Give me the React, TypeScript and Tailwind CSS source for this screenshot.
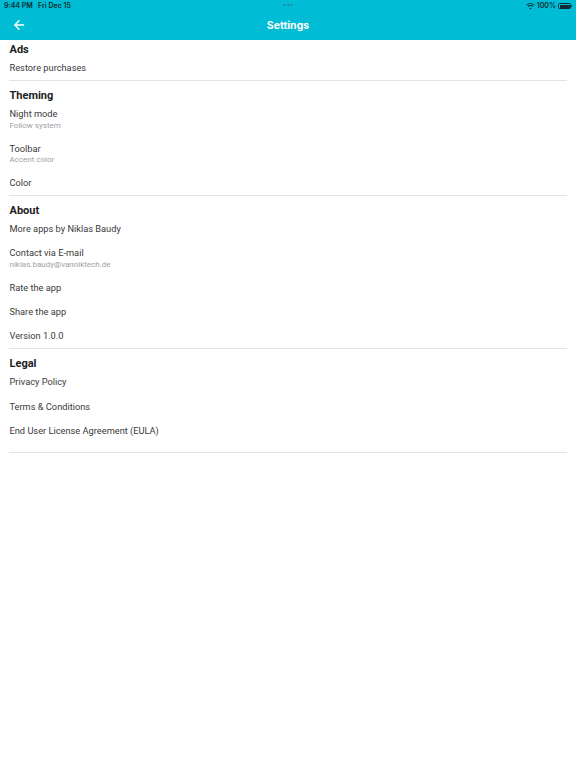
import React from "react";

type Item = { title: string; subtitle?: string };

type Section = { heading: string; items: Item[] };

const sections: Section[] = [
  { heading: "Ads", items: [{ title: "Restore purchases" }] },
  {
    heading: "Theming",
    items: [
      { title: "Night mode", subtitle: "Follow system" },
      { title: "Toolbar", subtitle: "Accent color" },
      { title: "Color" },
    ],
  },
  {
    heading: "About",
    items: [
      { title: "More apps by Niklas Baudy" },
      { title: "Contact via E-mail", subtitle: "niklas.baudy@vanniktech.de" },
      { title: "Rate the app" },
      { title: "Share the app" },
      { title: "Version 1.0.0" },
    ],
  },
  {
    heading: "Legal",
    items: [
      { title: "Privacy Policy" },
      { title: "Terms & Conditions" },
      { title: "End User License Agreement (EULA)" },
    ],
  },
];

function StatusBar() {
  return (
    <div className="relative flex h-[12px] items-center justify-between px-[4px] text-[7px] font-semibold text-[#0d2b30]">
      <span>9:44 PM&nbsp;&nbsp; Fri Dec 15</span>
      <div className="absolute left-1/2 top-[4px] flex -translate-x-1/2 gap-[1.5px]">
        <span className="h-[2px] w-[2px] rounded-full bg-[#2a7d88]" />
        <span className="h-[2px] w-[2px] rounded-full bg-[#2a7d88]" />
        <span className="h-[2px] w-[2px] rounded-full bg-[#2a7d88]" />
      </div>
      <div className="flex items-center gap-[2px]">
        <svg width="9" height="7" viewBox="0 0 18 14" fill="#0d2b30">
          <path d="M9 2.2c2.9 0 5.5 1.1 7.5 3l1.3-1.4C15.5 1.6 12.4.3 9 .3S2.5 1.6.2 3.8l1.3 1.4c2-1.9 4.6-3 7.5-3zm0 4c1.8 0 3.4.7 4.6 1.8l1.3-1.4C13.4 5.1 11.3 4.2 9 4.2S4.6 5.1 3.1 6.6l1.3 1.4C5.6 6.9 7.2 6.2 9 6.2zm0 3.9c-.8 0-1.6.3-2.1.8L9 13.2l2.1-2.3c-.5-.5-1.3-.8-2.1-.8z" />
        </svg>
        <span>100%</span>
        <div className="flex items-center">
          <div className="flex h-[6px] w-[13px] items-center rounded-[1.5px] border border-[#0d2b30] p-[0.5px]">
            <div className="h-full w-full rounded-[0.5px] bg-[#0d2b30]" />
          </div>
          <div className="h-[2px] w-[1px] rounded-r-sm bg-[#0d2b30]" />
        </div>
      </div>
    </div>
  );
}

function Header() {
  return (
    <header className="h-[40px] bg-[#00bcd4] text-white">
      <StatusBar />
      <div className="relative flex h-[27px] items-center justify-center">
        <svg
          className="absolute left-[13px] top-[7px]"
          width="12"
          height="12"
          viewBox="0 0 24 24"
          fill="none"
          stroke="white"
          strokeWidth="2.6"
          strokeLinecap="square"
        >
          <path d="M21 12H4M12 3.5L3.5 12l8.5 8.5" />
        </svg>
        <h1 className="pt-[1px] text-[10.5px] font-bold">Settings</h1>
      </div>
    </header>
  );
}

function Row({ title, subtitle }: Item) {
  return (
    <div className="px-[9.5px] py-[6px] font-['Roboto',sans-serif]">
      <div className="text-[9.25px] leading-[12.25px] text-[#3a3a3c]">{title}</div>
      {subtitle ? (
        <div className="text-[8px] leading-[10px] text-[#a0a0a4]">{subtitle}</div>
      ) : null}
    </div>
  );
}

export default function App() {
  return (
    <div
      className="min-h-[768px] bg-white"
      style={{ fontFamily: "Inter, 'Liberation Sans', sans-serif" }}
    >
      <Header />
      <main>
        {sections.map((section, i) => (
          <section key={section.heading}>
            <h2
              className={`px-[9.5px] font-['Roboto',sans-serif] text-[11px] font-bold leading-[12px] text-[#222] ${
                i === 0 ? "pt-[4px]" : "pt-[9px]"
              }`}
            >
              {section.heading}
            </h2>
            {section.items.map((item) => (
              <Row key={item.title} {...item} />
            ))}
            <div
              className={`mx-[9px] h-px bg-[#e3e3e5] ${
                i === sections.length - 1 ? "mt-[9px]" : ""
              }`}
            />
          </section>
        ))}
      </main>
    </div>
  );
}
